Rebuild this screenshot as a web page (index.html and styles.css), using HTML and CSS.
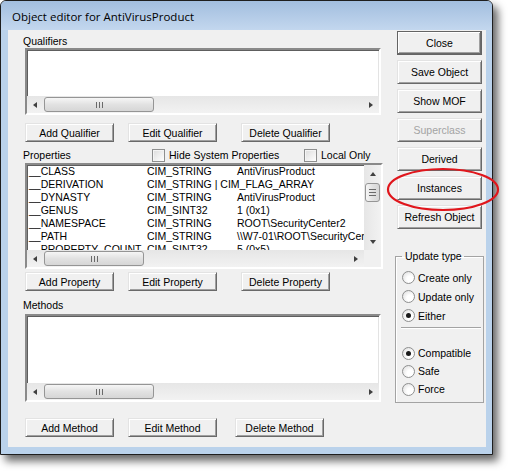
FILE: index.html
```html
<!DOCTYPE html>
<html lang="en">
<head>
    <meta charset="UTF-8">
    <title>Object editor for AntiVirusProduct</title>
    <link rel="stylesheet" href="styles.css">
</head>
<body>
<div class="page">
    <div class="window">
        <div class="titlebar">Object editor for AntiVirusProduct</div>
        <div class="client">
            <div class="main">
                <div class="label label-qual">Qualifiers</div>
                <div class="listbox list-qual">
                    <div class="list-body"></div>
                    <div class="hscroll">
                        <span class="sb-btn arrow-left"></span>
                        <span class="thumb-h thumb-wide"><i class="grip-h"></i></span>
                        <span class="track"></span>
                        <span class="sb-btn arrow-right"></span>
                    </div>
                </div>
                <div class="btn-row row-qual">
                    <button class="btn">Add Qualifier</button>
                    <button class="btn">Edit Qualifier</button>
                    <button class="btn btn-far">Delete Qualifier</button>
                </div>

                <div class="prop-head">
                    <span class="label label-prop">Properties</span>
                    <span class="check check-hide"><span class="box"></span>Hide System Properties</span>
                    <span class="check"><span class="box"></span>Local Only</span>
                </div>
                <div class="listbox list-prop">
                    <div class="list-area">
                        <div class="rows">
                            <div class="row"><span>__CLASS</span><span>CIM_STRING</span><span>AntiVirusProduct</span></div>
                            <div class="row"><span>__DERIVATION</span><span>CIM_STRING | CIM_FLAG_ARRAY</span><span></span></div>
                            <div class="row"><span>__DYNASTY</span><span>CIM_STRING</span><span>AntiVirusProduct</span></div>
                            <div class="row"><span>__GENUS</span><span>CIM_SINT32</span><span>1 (0x1)</span></div>
                            <div class="row"><span>__NAMESPACE</span><span>CIM_STRING</span><span>ROOT\SecurityCenter2</span></div>
                            <div class="row"><span>__PATH</span><span>CIM_STRING</span><span>\\W7-01\ROOT\SecurityCenter2:AntiVirusProduct</span></div>
                            <div class="row"><span>__PROPERTY_COUNT</span><span>CIM_SINT32</span><span>5 (0x5)</span></div>
                        </div>
                        <div class="vscroll">
                            <span class="sb-btn arrow-up"></span>
                            <span class="thumb-v"><i class="grip-v"></i></span>
                            <span class="track"></span>
                            <span class="sb-btn arrow-down"></span>
                        </div>
                    </div>
                    <div class="hscroll">
                        <span class="sb-btn arrow-left"></span>
                        <span class="thumb-h"><i class="grip-h"></i></span>
                        <span class="track"></span>
                        <span class="sb-btn arrow-right"></span>
                        <span class="corner"></span>
                    </div>
                </div>
                <div class="btn-row row-prop">
                    <button class="btn">Add Property</button>
                    <button class="btn">Edit Property</button>
                    <button class="btn btn-far">Delete Property</button>
                </div>

                <div class="label label-meth">Methods</div>
                <div class="listbox list-meth">
                    <div class="list-body"></div>
                    <div class="hscroll">
                        <span class="sb-btn arrow-left"></span>
                        <span class="thumb-h thumb-wide"><i class="grip-h"></i></span>
                        <span class="track"></span>
                        <span class="sb-btn arrow-right"></span>
                    </div>
                </div>
                <div class="btn-row row-meth">
                    <button class="btn">Add Method</button>
                    <button class="btn">Edit Method</button>
                    <button class="btn btn-near">Delete Method</button>
                </div>
            </div>

            <div class="side">
                <button class="btn btn-side btn-default">Close</button>
                <button class="btn btn-side">Save Object</button>
                <button class="btn btn-side">Show MOF</button>
                <button class="btn btn-side" disabled>Superclass</button>
                <button class="btn btn-side">Derived</button>
                <button class="btn btn-side">Instances</button>
                <button class="btn btn-side">Refresh Object</button>

                <fieldset class="group">
                    <legend>Update type</legend>
                    <div class="radio"><span class="dot"></span>Create only</div>
                    <div class="radio"><span class="dot"></span>Update only</div>
                    <div class="radio"><span class="dot on"></span>Either</div>
                    <div class="sep"></div>
                    <div class="radio radio-low"><span class="dot on"></span>Compatible</div>
                    <div class="radio radio-low"><span class="dot"></span>Safe</div>
                    <div class="radio radio-low"><span class="dot"></span>Force</div>
                </fieldset>
            </div>
        </div>
    </div>

    <!-- red callout drawn over the dialog -->
    <svg class="callout" width="509" height="473" viewBox="0 0 509 473">
        <ellipse cx="443" cy="189.5" rx="55" ry="20.5" fill="none" stroke="#e0161c" stroke-width="2.2"/>
    </svg>
</div>
</body>
</html>
```

FILE: styles.css
```css
* {
    box-sizing: border-box;
}

body {
    margin: 0;
    background: #fff;
    font-family: 'Liberation Sans', Arial, sans-serif;
    font-size: 10.5px;
    color: #000;
}

.page {
    position: relative;
    width: 509px;
    height: 473px;
}

.window {
    width: 493px;
    height: 455px;
    border: 1px solid #1e1e1e;
    border-radius: 6px 6px 0 0;
    background: #bad2eb;
    box-shadow: 5px 6px 9px rgba(0,0,0,0.6);
    display: flex;
    flex-direction: column;
}

.titlebar {
    height: 29px;
    padding: 3px 0 0 11px;
    line-height: 26px;
    font-family: 'Open Sans', 'Liberation Sans', sans-serif;
    font-size: 11.5px;
    border-radius: 5px 5px 0 0;
    background: linear-gradient(#a2bedf, #c3d7ee);
}

.client {
    margin: 0 6px 7px 7px;
    height: 417px;
    background: #f0f0f0;
    display: flex;
}

.main {
    width: 376px;
    flex: none;
}

.label {
    padding-left: 15px;
    height: 14px;
    line-height: 14px;
}

.label-qual {
    margin-top: 4px;
}

.label-meth {
    margin-top: 7px;
}

/* sunken list boxes */
.listbox {
    margin-left: 17px;
    width: 356px;
    border: 2px solid;
    border-color: #8a8a8a #fff #fff #8a8a8a;
    box-shadow: inset 1px 1px 0 #5e5e5e, inset -1px -1px 0 #e3e3e3;
    background: #fff;
    display: flex;
    flex-direction: column;
}

.list-qual {
    height: 67px;
}

.list-prop {
    width: 358px;
    height: 106px;
    margin-top: 1px;
}

.list-meth {
    height: 88px;
    margin-top: 2px;
}

.list-body {
    flex: 1;
}

.list-area {
    height: 85px;
    display: flex;
}

.rows {
    flex: 1;
    overflow: hidden;
    padding-left: 2px;
}

.row {
    display: grid;
    grid-template-columns: 118px 90px auto;
    height: 13px;
    line-height: 13px;
    white-space: nowrap;
}

/* scrollbars */
.hscroll {
    height: 17px;
    flex: none;
    display: flex;
    background: linear-gradient(#e6e6e6, #f2f2f2);
}

.vscroll {
    width: 17px;
    display: flex;
    flex-direction: column;
    background: linear-gradient(90deg, #e6e6e6, #f2f2f2);
}

.track {
    flex: 1;
}

.corner {
    width: 17px;
    background: #f0f0f0;
}

.sb-btn {
    width: 17px;
    height: 17px;
    flex: none;
    display: flex;
    align-items: center;
    justify-content: center;
}

.sb-btn::before {
    content: '';
    width: 0;
    height: 0;
    border: 3.5px solid transparent;
}

.arrow-left::before {
    border-right: 4px solid #404040;
    border-left-width: 0;
    margin-left: -1px;
}

.arrow-right::before {
    border-left: 4px solid #404040;
    border-right-width: 0;
    margin-left: 1px;
}

.arrow-up::before {
    border-bottom: 4px solid #404040;
    border-top-width: 0;
}

.arrow-down::before {
    border-top: 4px solid #404040;
    border-bottom-width: 0;
}

.thumb-h {
    width: 100px;
    margin: 1px 0;
    border: 1px solid #959595;
    border-radius: 3px;
    background: linear-gradient(#f6f6f6, #e2e2e2 50%, #d6d6d6);
    display: flex;
    align-items: center;
    justify-content: center;
}

.thumb-wide {
    width: 110px;
}

.thumb-v {
    height: 19px;
    margin: 1px 1px;
    border: 1px solid #959595;
    border-radius: 3px;
    background: linear-gradient(90deg, #f6f6f6, #e2e2e2 50%, #d6d6d6);
    display: flex;
    align-items: center;
    justify-content: center;
}

.grip-h {
    width: 7px;
    height: 6px;
    background: repeating-linear-gradient(90deg, #6a6a6a 0 1px, transparent 1px 3px);
}

.grip-v {
    width: 7px;
    height: 7px;
    background: repeating-linear-gradient(#6a6a6a 0 1px, transparent 1px 3px);
}

/* push buttons */
.btn {
    width: 89px;
    height: 19px;
    padding: 0;
    font: inherit;
    color: #000;
    background: #f0f0f0;
    border: 1px solid;
    border-color: #e3e3e3 #696969 #696969 #e3e3e3;
    box-shadow: inset 1px 1px 0 #fff, inset -1px -1px 0 #a0a0a0;
}

.btn:disabled {
    color: #a3a3a3;
}

.btn-row {
    display: flex;
    margin-left: 17px;
    gap: 14px;
}

.row-qual {
    margin-top: 8px;
}

.row-prop {
    margin-top: 3px;
}

.row-meth {
    margin-top: 16px;
}

.btn-far {
    margin-left: 10px;
}

.btn-near {
    margin-left: 4px;
}

.prop-head {
    margin-top: 6px;
    height: 14px;
    display: flex;
    align-items: center;
}

.label-prop {
    width: 144px;
}

.check {
    display: flex;
    align-items: center;
}

.check-hide {
    width: 152px;
}

.box {
    width: 13px;
    height: 13px;
    margin-right: 4px;
    border: 1px solid #8e8f8f;
    background: linear-gradient(135deg, #dcdcdc, #fff);
    box-shadow: inset 1px 1px 0 #f4f4f4;
}

/* right column */
.side {
    margin-left: 11px;
    width: 89px;
    display: flex;
    flex-direction: column;
}

.btn-side {
    width: 85px;
    height: 24px;
    margin-left: 2px;
    margin-top: 5px;
}

.btn-default {
    margin-top: 1px;
    border-color: #646464;
    box-shadow: inset -1px -1px 0 #696969, inset 1px 1px 0 #fff, inset -2px -2px 0 #a0a0a0;
}

.group {
    margin: 21px 0 0;
    padding: 5px 2px 4px 6px;
    min-width: 0;
    border: 1px solid #a3a3a3;
    box-shadow: inset 1px 1px 0 #fff;
}

.group legend {
    padding: 0 2px 0 3px;
    line-height: 13px;
}

.radio {
    height: 19px;
    display: flex;
    align-items: center;
}

.radio-low {
    height: 18px;
}

.sep {
    margin: 2px 0 15px -1px;
    height: 2px;
    border-top: 1px solid #a3a3a3;
    border-bottom: 1px solid #fff;
}

.dot {
    width: 13px;
    height: 13px;
    margin-right: 3px;
    border: 1px solid #8e8f8f;
    border-radius: 50%;
    background: radial-gradient(circle at 65% 65%, #fff 30%, #dadada);
    display: flex;
    align-items: center;
    justify-content: center;
}

.dot.on::after {
    content: '';
    width: 5px;
    height: 5px;
    border-radius: 50%;
    background: #1a1a1a;
}

.callout {
    position: absolute;
    left: 0;
    top: 0;
    pointer-events: none;
}
```
